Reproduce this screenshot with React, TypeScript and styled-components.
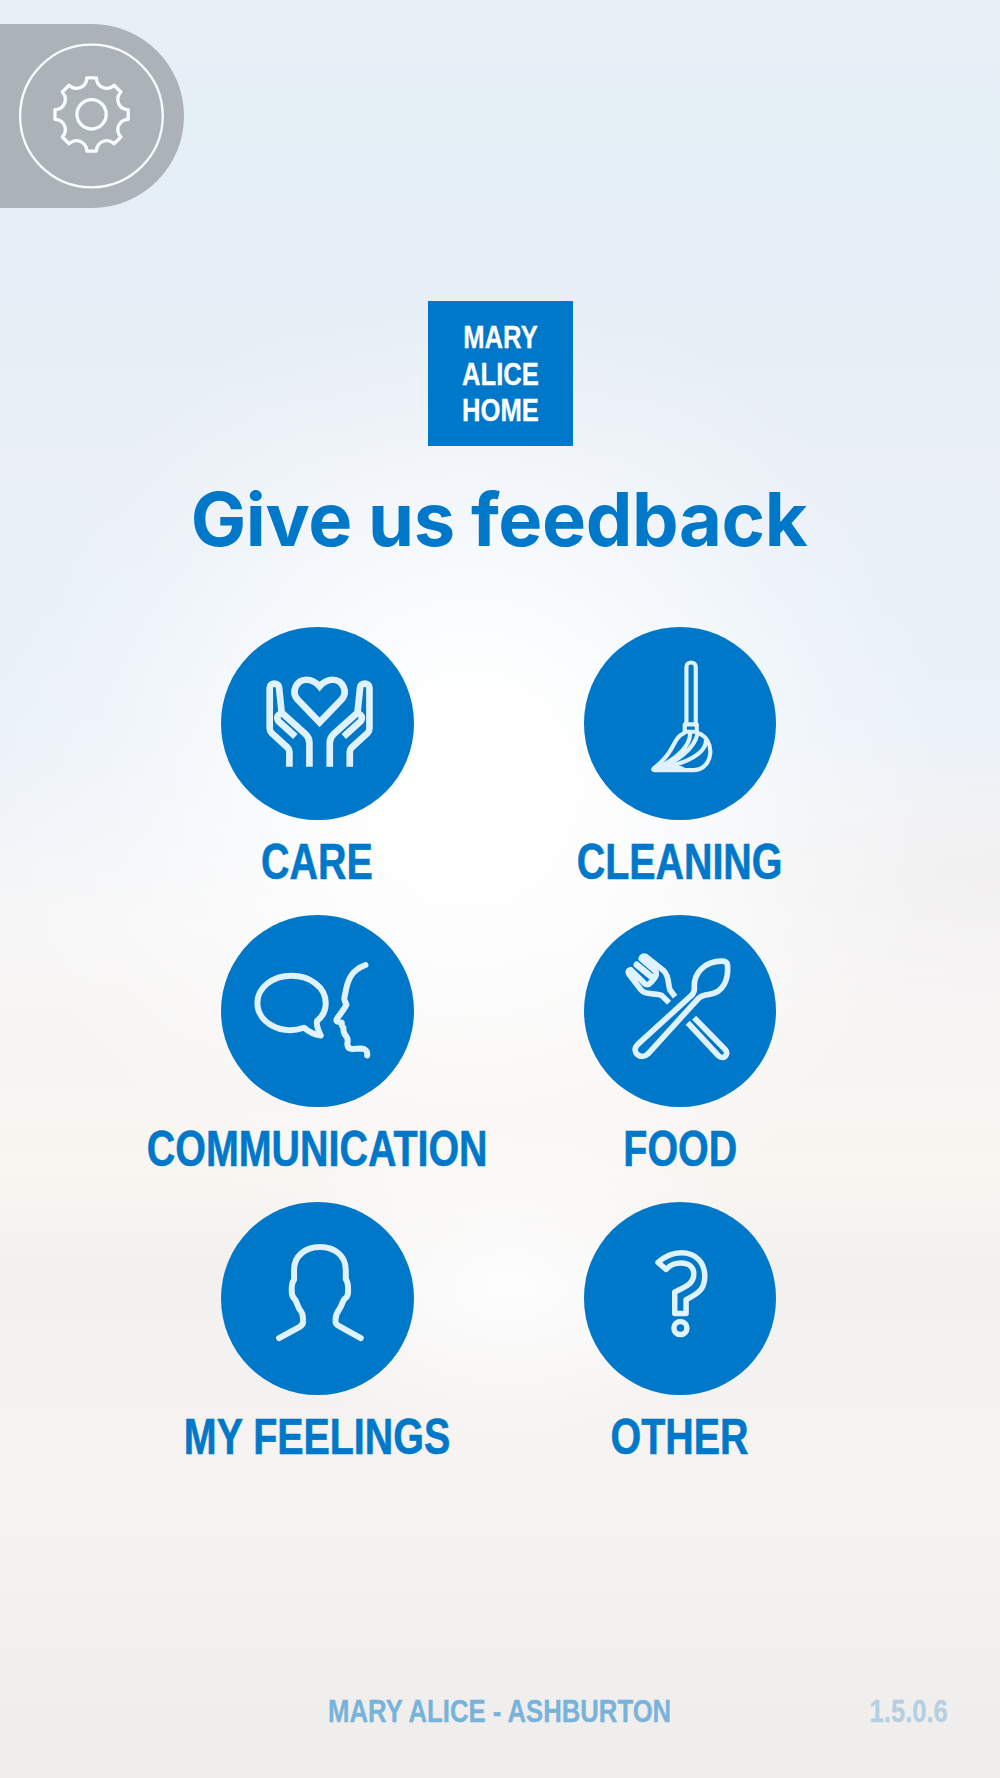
import React from "react";
import styled, { createGlobalStyle } from "styled-components";

const BLUE = "#0078c9";
const PALE = "#dff2fd";

const GlobalStyle = createGlobalStyle`
  * { box-sizing: border-box; }
  body { margin: 0; }
`;

const Screen = styled.div`
  position: relative;
  width: 1000px;
  height: 1778px;
  overflow: hidden;
  display: flex;
  flex-direction: column;
  padding-top: 24px;
  color: ${BLUE};
  font-family: "Liberation Sans", Arial, sans-serif;
  font-weight: 700;
  background:
    radial-gradient(ellipse 480px 500px at 470px 780px, #fff 0%, rgba(255, 255, 255, 0.92) 22%, rgba(255, 255, 255, 0.6) 48%, rgba(255, 255, 255, 0.2) 76%, rgba(255, 255, 255, 0) 100%),
    radial-gradient(ellipse 270px 160px at 510px 1285px, rgba(255, 255, 255, 0.9) 0%, rgba(255, 255, 255, 0.5) 50%, rgba(255, 255, 255, 0) 100%),
    radial-gradient(ellipse 380px 160px at 1000px 890px, rgba(242, 240, 240, 0.9) 0%, rgba(242, 240, 240, 0) 100%),
    linear-gradient(180deg, #e8eff7 0%, #e5eff6 7%, #e6eef6 18%, #eaf0f6 26%, #e9f1f8 34%, #ebf2f9 41%, #f1f4f8 47%, #f8f7f7 52%, #f7f5f3 59%, #f9f5f1 66%, #f3f1f0 71%, #f4f2f0 77%, #f7f3f0 84%, #f2efed 93%, #efeeed 100%);
`;

const SettingsTab = styled.button`
  width: 183.5px;
  height: 184px;
  flex: none;
  padding: 0;
  border: 0;
  border-radius: 0 92px 92px 0;
  background: #abb3b8;
`;

const Drawing = styled.svg<{ $ink?: string; $cap?: string }>`
  display: block;
  width: 100%;
  height: 100%;
  fill: none;
  stroke: ${(p) => p.$ink ?? PALE};
  stroke-linecap: ${(p) => p.$cap ?? "round"};
  stroke-linejoin: round;
`;

const Logo = styled.div`
  width: 145px;
  height: 145px;
  flex: none;
  align-self: center;
  margin-top: 93px;
  padding-top: 18px;
  background: ${BLUE};
  color: #fff;
  font-size: 32px;
  line-height: 36.5px;
  text-align: center;
  -webkit-text-stroke: 0.3px #fff;
`;

const LogoLine = styled.div`
  transform: scaleX(0.8);
`;

const Title = styled.h1`
  margin: 28px 2px 0 0;
  height: 90px;
  font-family: Inter, sans-serif;
  font-weight: 700;
  font-size: 74px;
  line-height: 90px;
  letter-spacing: -0.38px;
  word-spacing: -1px;
  text-align: center;
  white-space: nowrap;
`;

const Topics = styled.main`
  display: grid;
  grid-template-columns: 362.5px 362.5px;
  grid-auto-rows: 287.5px;
  justify-content: center;
  margin-top: 63px;
  padding-right: 3px;
`;

const Topic = styled.div`
  display: flex;
  flex-direction: column;
  align-items: center;
`;

const Disc = styled.div`
  width: 192.5px;
  height: 192.5px;
  flex: none;
  border-radius: 50%;
  background: ${BLUE};
`;

const Label = styled.div`
  margin-top: 13px;
  font-size: 50px;
  line-height: 58px;
  white-space: nowrap;
  -webkit-text-stroke: 0.6px ${BLUE};
  transform: scaleX(0.788);
`;

const Footer = styled.footer`
  display: grid;
  grid-template-columns: 1fr auto 1fr;
  align-items: center;
  margin-top: auto;
  height: 40px;
  margin-bottom: 47px;
  padding: 0 52px;
  font-size: 32px;
  line-height: 40px;
  -webkit-text-stroke: 0.4px ${BLUE};
`;

const Site = styled.span`
  grid-column: 2;
  opacity: 0.5;
  transform: scaleX(0.803);
`;

const Version = styled.span`
  justify-self: end;
  opacity: 0.25;
  transform: scaleX(0.8);
  transform-origin: right center;
`;

function gearPath(cx: number, cy: number) {
  const point = (radius: number, degrees: number) => {
    const a = (degrees * Math.PI) / 180;
    return `${(cx + radius * Math.sin(a)).toFixed(1)} ${(cy - radius * Math.cos(a)).toFixed(1)}`;
  };
  let d = "";
  for (let k = 0; k < 8; k++) {
    const a = k * 45;
    d += `${k ? "L" : "M"}${point(111, a - 7.5)} L${point(111, a + 7.5)} L${point(104, a + 8.5)} `;
    d += `A31 31 0 0 0 ${point(104, a + 36.5)} `;
  }
  return d + "Z";
}

const GearIcon = () => (
  <Drawing viewBox="0 42 552 552" $ink="#f7fcff">
    <circle cx="275" cy="318" r="214.5" strokeWidth="7" />
    <path d={gearPath(275.5, 313.5)} strokeWidth="10" />
    <circle cx="275.5" cy="313" r="44" strokeWidth="10" />
  </Drawing>
);

const Hand = () => (
  <path d="M240 455V409Q240 403 235 398L187 354Q181 348 181 340V217C181 202 208 202 209 217L217 294Q200 300 205 314Q206 318 210 321L258 364M217 294Q223 298 228 303L288 357Q300 368 300 384V455" />
);

const CareIcon = () => (
  <Drawing viewBox="35 36 577 577" strokeWidth="20" $cap="butt">
    <path
      strokeMiterlimit="4"
      style={{ strokeLinejoin: "miter" }}
      d="M330.5 322L264 253A36 36 0 0 1 291 194C308 194 320 202 330.5 214C341 202 353 194 370 194A36 36 0 0 1 397 253Z"
    />
    <Hand />
    <g transform="translate(661 0) scale(-1 1)">
      <Hand />
    </g>
  </Drawing>
);

const CleaningIcon = () => (
  <Drawing viewBox="42 36 577 577" strokeWidth="12.5">
    <path d="M349 322V156C349 138 377 138 377 156V322" />
    <path d="M344 328H380V350H344Z" />
    <path d="M342 354C305 371 318 409 251 460Q247 465 254 465H372C432 462 438 370 382 354" />
    <path d="M360 356C360 390 325 430 254 462M382 356C374 399 320 442 258 463M408 374C408 412 360 442 264 462M268 453L320 453L340 463" />
  </Drawing>
);

const CommunicationIcon = () => (
  <Drawing viewBox="34 30 577 577" strokeWidth="18">
    <path d="M283 368C210 392 143 350 143 294C143 247 189 212 245 212C302 212 348 247 348 294C348 320 337 336 322 347Q318 360 333 391Q306 388 283 368Z" />
    <path d="M467 180C424 196 413 224 406 268Q402 282 405 287L410 299Q406 308 382 340Q376 350 388 351L396 353Q394 362 401 368Q400 376 404 386L412 398Q415 404 413 413Q411 430 427 432L455 430Q475 432 472 451" />
  </Drawing>
);

const FoodIcon = () => (
  <Drawing viewBox="42 29 577 577" strokeWidth="17" $cap="butt">
    <path d="M203 417L364 270Q373 261 373 249C369 203 404 167 455 167Q470 167 472 178C476 222 460 262 417 267C400 269 393 271 384 280L234 445C213 466 180 439 203 417Z" />
    <path d="M372 337L466 433C478 447 459 465 445 451L353 352" />
    <path d="M315 274L300 254C293 240 299 213 281 196L228 154Q217 149 213 160L253 194Q263 204 255 216Q247 228 237 236Q230 240 222 233L182 193Q171 195 176 205L208 247C222 272 250 261 275 270L297 292" />
    <path d="M200 178L244 214" strokeWidth="19" style={{ strokeLinecap: "round" }} />
  </Drawing>
);

const FeelingsIcon = () => (
  <Drawing viewBox="154 37 577 577" strokeWidth="18">
    <path d="M328 445L390 411Q401 404 400 393C399 377 400 371 389 358C381 344 381 334 373 326C366 319 366 312 366 298C366 286 366 278 373 270V240C373 200 405 172 451 172C497 172 528 200 528 240V268C535 277 535 286 535 298C535 312 535 321 524 328C518 334 518 345 509 358C497 373 498 380 497 393Q496 403 508 409L573 445" />
  </Drawing>
);

const OtherIcon = () => (
  <Drawing viewBox="42 36 577 577" strokeWidth="16.5">
    <path d="M264 217Q297 188 333 188C379 188 404 219 404 259C404 299 381 312 348 329V370H314V306C350 289 371 280 371 252C371 231 356 219 333 219Q305 219 288 238Z" />
    <circle cx="331" cy="414" r="19.5" />
  </Drawing>
);

const topics = [
  { name: "CARE", Icon: CareIcon },
  { name: "CLEANING", Icon: CleaningIcon },
  { name: "COMMUNICATION", Icon: CommunicationIcon },
  { name: "FOOD", Icon: FoodIcon },
  { name: "MY FEELINGS", Icon: FeelingsIcon },
  { name: "OTHER", Icon: OtherIcon },
];

export default function App() {
  return (
    <>
      <GlobalStyle />
      <Screen>
        <SettingsTab aria-label="Settings">
          <GearIcon />
        </SettingsTab>
        <Logo>
          <LogoLine>MARY</LogoLine>
          <LogoLine>ALICE</LogoLine>
          <LogoLine>HOME</LogoLine>
        </Logo>
        <Title>Give us feedback</Title>
        <Topics>
          {topics.map(({ name, Icon }) => (
            <Topic key={name}>
              <Disc>
                <Icon />
              </Disc>
              <Label>{name}</Label>
            </Topic>
          ))}
        </Topics>
        <Footer>
          <Site>MARY ALICE - ASHBURTON</Site>
          <Version>1.5.0.6</Version>
        </Footer>
      </Screen>
    </>
  );
}
